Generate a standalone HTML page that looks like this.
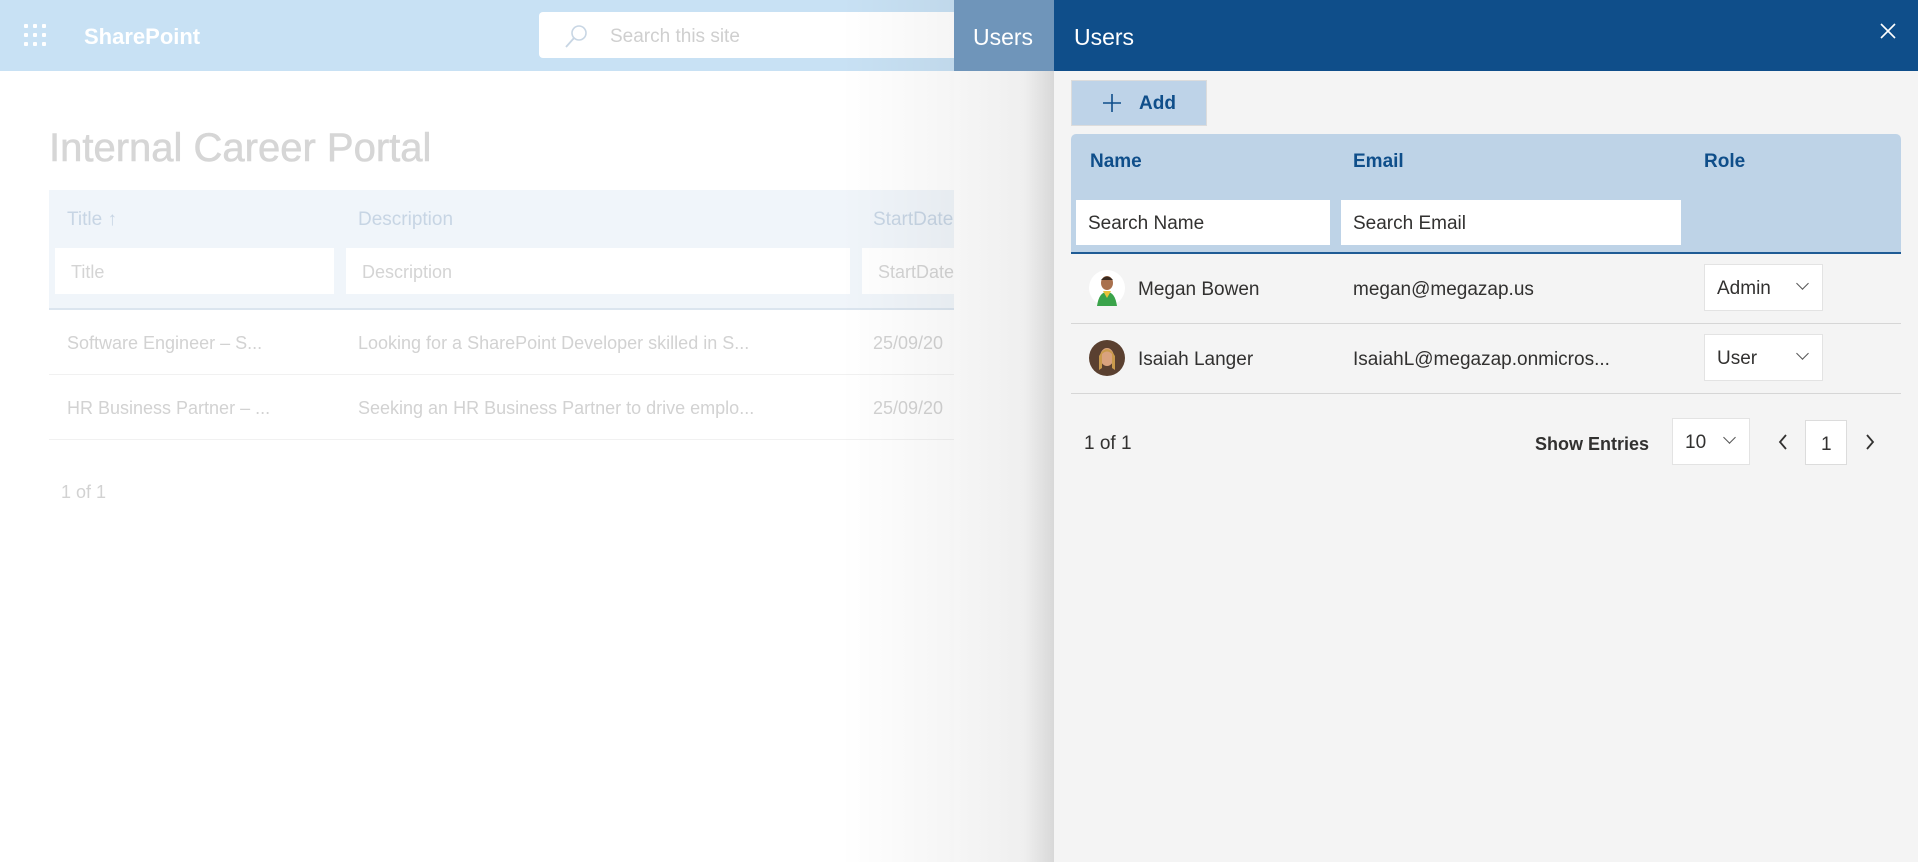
<!DOCTYPE html>
<html><head><meta charset="utf-8"><style>
*{box-sizing:border-box;margin:0;padding:0}
body{width:1918px;height:862px;overflow:hidden;background:#fff;font-family:"Liberation Sans",sans-serif;position:relative}
.abs{position:absolute}
.hdr{left:0;top:0;width:954px;height:71px;background:#c8e1f4}
.waf{left:24px;top:24px;width:24px;height:24px}
.waf i{position:absolute;width:4px;height:4px;background:#fff;border-radius:1px}
.th{color:#c7d5e4;font-size:19px}
.inp{background:#fff;height:46px;top:248px}
.inp span{position:absolute;left:16px;top:14px;font-size:18px;color:#d4d4d4}
.row{color:#d2d2d2;font-size:18px}
.panelstrip{left:954px;top:0;width:100px;height:862px;background:linear-gradient(to right,#f6f6f6 0%,#efefef 70%,#d8d8d8 100%)}
.ph{left:1054px;top:0;width:864px;height:71px;background:#0f4e8a}
.pb{left:1054px;top:71px;width:864px;height:791px;background:#f4f4f4}
.col{color:#0f4e8a;font-size:19px;font-weight:bold}
.sin{background:#fff;height:45px;top:200px}
.sin span{position:absolute;left:12px;top:13px;font-size:19px;color:#323130}
.txt{font-size:19px;color:#323130}
.dd{background:#fff;border:1px solid #e3e3e3;width:119px;height:47px}
.dd span{position:absolute;left:12px;top:13px;font-size:19px;color:#323130}
.chev{position:absolute;width:9px;height:9px;border-right:1.5px solid #555;border-bottom:1.5px solid #555;transform:rotate(45deg)}
</style></head><body>
<div class="abs hdr"></div>
<div class="abs waf">
<i style="left:0;top:0"></i><i style="left:9px;top:0"></i><i style="left:18px;top:0"></i>
<i style="left:0;top:9px"></i><i style="left:9px;top:9px"></i><i style="left:18px;top:9px"></i>
<i style="left:0;top:18px"></i><i style="left:9px;top:18px"></i><i style="left:18px;top:18px"></i>
</div>
<div class="abs" style="left:84px;top:24px;color:#fff;font-size:22px;font-weight:bold">SharePoint</div>
<div class="abs" style="left:539px;top:12px;width:415px;height:46px;background:#fff;border-radius:4px 0 0 4px"></div>
<svg class="abs" style="left:562px;top:22px" width="28" height="28" viewBox="0 0 28 28"><circle cx="17" cy="11" r="7" fill="none" stroke="#c8d6e4" stroke-width="1.6"/><path d="M12 16 L4 25" stroke="#c8d6e4" stroke-width="1.8"/></svg>
<div class="abs" style="left:610px;top:26px;font-size:19px;color:#cfcfcf">Search this site</div>
<div class="abs" style="left:49px;top:126px;font-size:40px;color:#d6d6d6;-webkit-text-stroke:0.6px #d6d6d6">Internal Career Portal</div>
<div class="abs" style="left:49px;top:190px;width:905px;height:120px;background:#f0f5fa;border-bottom:2px solid #dbe5ef"></div>
<div class="abs th" style="left:67px;top:209px">Title ↑</div>
<div class="abs th" style="left:358px;top:209px">Description</div>
<div class="abs th" style="left:873px;top:209px">StartDate</div>
<div class="abs inp" style="left:55px;width:279px"><span>Title</span></div>
<div class="abs inp" style="left:346px;width:504px"><span>Description</span></div>
<div class="abs inp" style="left:862px;width:92px"><span>StartDate</span></div>
<div class="abs row" style="left:67px;top:333px">Software Engineer – S...</div>
<div class="abs row" style="left:358px;top:333px">Looking for a SharePoint Developer skilled in S...</div>
<div class="abs row" style="left:873px;top:333px">25/09/20</div>
<div class="abs" style="left:49px;top:374px;width:905px;height:1px;background:#f1f1f1"></div>
<div class="abs row" style="left:67px;top:398px">HR Business Partner – ...</div>
<div class="abs row" style="left:358px;top:398px">Seeking an HR Business Partner to drive emplo...</div>
<div class="abs row" style="left:873px;top:398px">25/09/20</div>
<div class="abs" style="left:49px;top:439px;width:905px;height:1px;background:#f1f1f1"></div>
<div class="abs row" style="left:61px;top:482px">1 of 1</div>
<div class="abs" style="left:840px;top:0;width:114px;height:862px;background:linear-gradient(to right,rgba(0,0,0,0),rgba(0,0,0,0.04))"></div>

<div class="abs panelstrip"></div>
<div class="abs" style="left:954px;top:0;width:100px;height:71px;background:#6f95ba"></div>
<div class="abs" style="left:973px;top:24px;color:#fff;font-size:23px">Users</div>
<div class="abs ph"></div>
<div class="abs" style="left:1074px;top:24px;color:#fff;font-size:23px">Users</div>
<svg class="abs" style="left:1879px;top:22px" width="18" height="18" viewBox="0 0 18 18"><path d="M2 2L16 16M16 2L2 16" stroke="#fff" stroke-width="1.6"/></svg>
<div class="abs pb"></div>
<div class="abs" style="left:1071px;top:80px;width:136px;height:46px;background:#bed3e8;border:1px solid #dcdcdc"></div>
<svg class="abs" style="left:1102px;top:93px" width="20" height="20" viewBox="0 0 20 20"><path d="M10 1V19M1 10H19" stroke="#0f4e8a" stroke-width="1.6"/></svg>
<div class="abs" style="left:1139px;top:93px;color:#0f4e8a;font-size:19px;font-weight:bold">Add</div>
<div class="abs" style="left:1071px;top:134px;width:830px;height:120px;background:#bed3e7;border-radius:5px 5px 0 0;border-bottom:2px solid #1f5b95"></div>
<div class="abs col" style="left:1090px;top:151px">Name</div>
<div class="abs col" style="left:1353px;top:151px">Email</div>
<div class="abs col" style="left:1704px;top:151px">Role</div>
<div class="abs sin" style="left:1076px;width:254px"><span>Search Name</span></div>
<div class="abs sin" style="left:1341px;width:340px"><span>Search Email</span></div>
<svg class="abs" style="left:1089px;top:270px" width="36" height="36" viewBox="0 0 36 36"><circle cx="18" cy="18" r="18" fill="#fff"/><ellipse cx="18" cy="13" rx="6" ry="7" fill="#a9714e"/><path d="M12 10 Q18 3 24 10" fill="#3a2a1f"/><path d="M8 36 Q10 22 18 22 Q26 22 28 36Z" fill="#3aa34a"/><path d="M14 21 L18 28 L22 21" fill="#e8c23a"/></svg>
<div class="abs txt" style="left:1138px;top:279px">Megan Bowen</div>
<div class="abs txt" style="left:1353px;top:279px">megan@megazap.us</div>
<div class="abs dd" style="left:1704px;top:264px"><span>Admin</span><i class="chev" style="left:93px;top:14px"></i></div>
<div class="abs" style="left:1071px;top:323px;width:830px;height:1px;background:#d6d6d6"></div>
<svg class="abs" style="left:1089px;top:340px" width="36" height="36" viewBox="0 0 36 36"><circle cx="18" cy="18" r="18" fill="#5a4030"/><ellipse cx="18" cy="17" rx="7" ry="9" fill="#d9a27e"/><path d="M10 16 Q18 2 26 16 L26 30 L23 28 L23 14 Q18 9 13 14 L13 28 L10 30Z" fill="#c99a4c"/></svg>
<div class="abs txt" style="left:1138px;top:349px">Isaiah Langer</div>
<div class="abs txt" style="left:1353px;top:349px">IsaiahL@megazap.onmicros...</div>
<div class="abs dd" style="left:1704px;top:334px"><span>User</span><i class="chev" style="left:93px;top:14px"></i></div>
<div class="abs" style="left:1071px;top:393px;width:830px;height:1px;background:#d6d6d6"></div>
<div class="abs txt" style="left:1084px;top:433px">1 of 1</div>
<div class="abs txt" style="left:1535px;top:434px;font-weight:bold;font-size:18px">Show Entries</div>
<div class="abs dd" style="left:1672px;top:418px;width:78px"><span>10</span><i class="chev" style="left:52px;top:14px"></i></div>
<svg class="abs" style="left:1777px;top:433px" width="12" height="18" viewBox="0 0 12 18"><path d="M9 2L3 9L9 16" fill="none" stroke="#323130" stroke-width="1.8"/></svg>
<div class="abs" style="left:1805px;top:420px;width:42px;height:45px;background:#fff;border:1px solid #dcdcdc"></div>
<div class="abs txt" style="left:1821px;top:434px">1</div>
<svg class="abs" style="left:1864px;top:433px" width="12" height="18" viewBox="0 0 12 18"><path d="M3 2L9 9L3 16" fill="none" stroke="#323130" stroke-width="1.8"/></svg>
</body></html>
